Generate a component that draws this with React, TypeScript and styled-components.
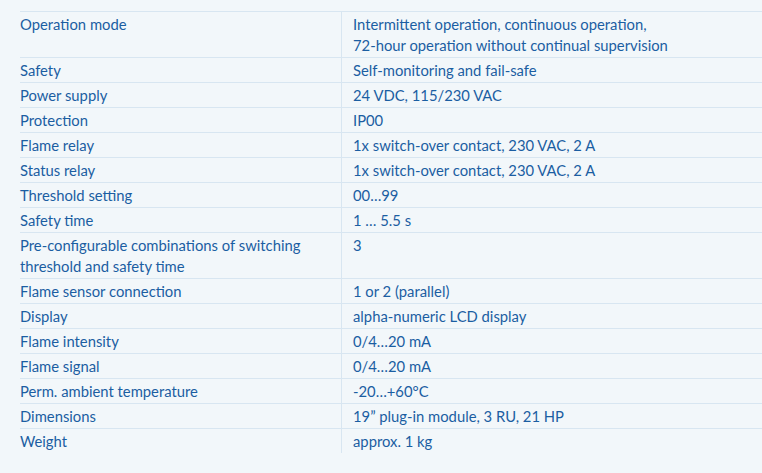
import React from "react";
import styled, { createGlobalStyle } from "styled-components";

const Global = createGlobalStyle`
  html, body { margin: 0; padding: 0; background: #f2f7fa; }
  body { font-family: Lato, "Noto Sans", sans-serif; }
`;

const Page = styled.div`
  padding: 11px 0 0 20px;
  width: 762px;
  height: 473px;
  box-sizing: border-box;
  overflow: hidden;
  background: #f2f7fa;
`;

const Table = styled.div`
  display: grid;
  grid-template-columns: 321px 1fr;
  width: 742px;
  border-top: 1px solid #d8e6f1;
`;

const Cell = styled.div<{ $value?: boolean; $last?: boolean }>`
  font-size: 14.8px;
  line-height: 21px;
  color: #1b5ea2;
  padding: 2px 0 1px ${(p) => (p.$value ? "11px" : "0")};
  border-bottom: ${(p) => (p.$last ? "none" : "1px solid #d8e6f1")};
  border-left: ${(p) => (p.$value ? "1px solid #d8e6f1" : "none")};
  white-space: pre-line;
`;

const rows: [string, string][] = [
  ["Operation mode", "Intermittent operation, continuous operation,\n72-hour operation without continual supervision"],
  ["Safety", "Self-monitoring and fail-safe"],
  ["Power supply", "24 VDC, 115/230 VAC"],
  ["Protection", "IP00"],
  ["Flame relay", "1x switch-over contact, 230 VAC, 2 A"],
  ["Status relay", "1x switch-over contact, 230 VAC, 2 A"],
  ["Threshold setting", "00…99"],
  ["Safety time", "1 … 5.5 s"],
  ["Pre-configurable combinations of switching\nthreshold and safety time", "3"],
  ["Flame sensor connection", "1 or 2 (parallel)"],
  ["Display", "alpha-numeric LCD display"],
  ["Flame intensity", "0/4…20 mA"],
  ["Flame signal", "0/4…20 mA"],
  ["Perm. ambient temperature", "-20…+60°C"],
  ["Dimensions", "19” plug-in module, 3 RU, 21 HP"],
  ["Weight", "approx. 1 kg"],
];

export default function App() {
  return (
    <>
      <Global />
      <Page>
        <Table>
          {rows.map(([k, v], i) => {
            const last = i === rows.length - 1;
            return (
              <React.Fragment key={k}>
                <Cell $last={last}>{k}</Cell>
                <Cell $value $last={last}>{v}</Cell>
              </React.Fragment>
            );
          })}
        </Table>
      </Page>
    </>
  );
}
